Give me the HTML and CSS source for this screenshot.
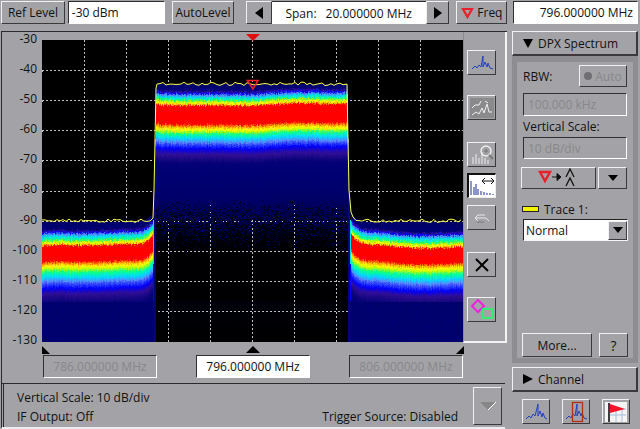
FILE: index.html
```html
<!DOCTYPE html>
<html lang="en">
<head>
<meta charset="utf-8">
<title>DPX Spectrum</title>
<link rel="stylesheet" href="styles.css">
</head>
<body>
<div class="app">
  <header class="topbar">
    <button class="btn ref">Ref Level</button>
    <div class="field reffield">-30 dBm</div>
    <button class="btn auto">AutoLevel</button>
    <div class="span">
      <button class="btn arrow"><svg width="12" height="14" viewBox="0 0 12 14"><path d="M10 1V13L2 7Z" fill="#000"/></svg></button>
      <div class="field spanfield"><span>Span:</span><span>20.000000 MHz</span></div>
      <button class="btn arrow narrow"><svg width="12" height="14" viewBox="0 0 12 14"><path d="M2 1V13L10 7Z" fill="#000"/></svg></button>
    </div>
    <button class="btn freq"><svg width="13" height="12" viewBox="0 0 13 12"><path d="M2 2H11L6.500 10Z" fill="none" stroke="#e8202a" stroke-width="2.200"/></svg>Freq</button>
    <div class="field freqfield">796.000000 MHz</div>
  </header>

  <div class="main">
    <section class="left">
      <div class="chart">
        <div class="chartrow">
          <div class="yaxis">
            <span>-30</span><span>-40</span><span>-50</span><span>-60</span><span>-70</span><span>-80</span><span>-90</span><span>-100</span><span>-110</span><span>-120</span><span>-130</span>
          </div>
          <div class="plot">
            <canvas id="plot" class="canvas" width="421" height="302"></canvas>
            <svg class="overlay" width="421" height="302" viewBox="0 0 421 302">
              <polyline id="trace" fill="none" stroke="#ffff50" stroke-width="1"/>
              <path d="M205.500 40.500H216L211 49Z" fill="none" stroke="#e8202a" stroke-width="1.600"/>
            </svg>
            <svg class="topmark" width="14" height="7" viewBox="0 0 14 7"><path d="M0 0H14L7 7Z" fill="#e01010"/></svg>
          </div>
          <div class="tools">
            <button class="tool t1"><svg width="24" height="20" viewBox="0 0 24 20"><path d="M2 16L5 13L7 15L9 12L11 14L13 3V14L15 9L17 14L18 10L20 15L23 16" fill="none" stroke="#2040c0"/></svg></button>
            <button class="tool t2"><svg width="24" height="20" viewBox="0 0 24 20"><rect x="0" y="0" width="24" height="20" fill="#8a8a8c"/><path d="M2 10L5 7H9L11 3M2 17L6 14L9 16L12 10L14 15L17 6L19 14H22M15 3L18 5" fill="none" stroke="#f0f0f0"/></svg></button>
            <button class="tool t3"><svg width="24" height="22" viewBox="0 0 24 22"><path d="M3 20V13M6 20V10M9 20V14M12 20V8M15 20V14M18 20V16" stroke="#eee"/><circle cx="16" cy="7" r="5" fill="none" stroke="#eee" stroke-width="1.400"/><path d="M19 11L23 15" stroke="#777" stroke-width="2"/><path d="M14 7H18M16 5V9" stroke="#777"/></svg></button>
            <button class="tool t4 active"><svg width="26" height="22" viewBox="0 0 26 22"><path d="M2 6V20M5 12V20M7 9V20M9 14V20M12 16V20M15 17V20M18 18V20M21 18V20M24 19V20" stroke="#1a2a9a"/><path d="M13 6H25M13 6L16 3M13 6L16 9M25 6L22 3M25 6L22 9" fill="none" stroke="#111"/></svg></button>
            <button class="tool t5"><svg width="20" height="14" viewBox="0 0 20 14"><path d="M3 7L6 4H13M3 7L6 10M3 7H14L17 10" fill="none" stroke="#e8e8e8"/><path d="M5 11H12" stroke="#7a7a7a"/></svg></button>
            <button class="tool t6"><svg width="18" height="18" viewBox="0 0 18 18"><path d="M3 3L15 15M15 3L3 15" stroke="#000" stroke-width="2"/></svg></button>
            <button class="tool t7"><svg width="24" height="22" viewBox="0 0 24 22"><path d="M8 1L14 7L8 13L2 7Z" fill="none" stroke="#f020e0" stroke-width="2"/><rect x="13" y="10" width="9" height="9" fill="none" stroke="#30f070" stroke-width="2"/></svg></button>
          </div>
        </div>
        <div class="markers">
          <svg class="mk mk-l" width="8" height="8" viewBox="0 0 8 8"><path d="M0 0L8 8H0Z" fill="#000"/></svg>
          <svg class="mk mk-c" width="14" height="7" viewBox="0 0 14 7"><path d="M0 7H14L7 0Z" fill="#000"/></svg>
          <svg class="mk mk-r" width="8" height="8" viewBox="0 0 8 8"><path d="M8 0V8H0Z" fill="#000"/></svg>
        </div>
        <div class="freqrow">
          <div class="field disabled">786.000000 MHz</div>
          <div class="field center">796.000000 MHz</div>
          <div class="field disabled">806.000000 MHz</div>
        </div>
      </div>
      <footer class="status">
        <div class="statustext">
          <div>Vertical Scale: 10 dB/div</div>
          <div class="statusline"><span>IF Output: Off</span><span>Trigger Source: Disabled</span></div>
        </div>
        <button class="btn statusbtn"><svg width="18" height="10" viewBox="0 0 18 10"><path d="M1 1H17L9 9Z" fill="#87878a"/><path d="M17 1L9 9" stroke="#fff"/></svg></button>
      </footer>
    </section>

    <aside class="right">
      <button class="btn head"><svg width="10" height="9" viewBox="0 0 10 9"><path d="M0 0H10L5 9Z" fill="#000"/></svg>DPX Spectrum</button>
      <div class="panel">
        <div class="rbw"><span>RBW:</span><button class="btn autobtn"><i class="dot"></i>Auto</button></div>
        <div class="field disabled wide">100.000 kHz</div>
        <div class="label">Vertical Scale:</div>
        <div class="field disabled wide">10 dB/div</div>
        <div class="peakrow">
          <button class="btn peak"><svg width="44" height="20" viewBox="0 0 44 20"><path d="M3 4H13L8 13Z" fill="none" stroke="#e8202a" stroke-width="2.400"/><path d="M15 9H23M20 5.500L24 9L20 12.500Z" stroke="#111" fill="#111"/><path d="M29 9L33 1L37 9M29 18L33 10L37 18" fill="none" stroke="#111" stroke-width="1.300"/></svg></button>
          <button class="btn peakdown"><svg width="10" height="6" viewBox="0 0 10 6"><path d="M0 0H10L5 6Z" fill="#000"/></svg></button>
        </div>
        <div class="trace"><i class="swatch"></i>Trace 1:</div>
        <div class="combo"><span>Normal</span><button class="btn combobtn"><svg width="10" height="6" viewBox="0 0 10 6"><path d="M0 0H10L5 6Z" fill="#000"/></svg></button></div>
        <div class="panelfoot">
          <button class="btn more">More...</button>
          <button class="btn help">?</button>
        </div>
      </div>
      <button class="btn head channel"><svg width="10" height="10" viewBox="0 0 10 10"><path d="M0 0L10 5L0 10Z" fill="#000"/></svg>Channel</button>
      <div class="bottomtools">
        <button class="tool"><svg width="24" height="20" viewBox="0 0 24 20"><path d="M2 17L5 14L7 16L9 12L11 14L14 2V14L16 9L18 15L19 11L21 16L23 17" fill="none" stroke="#2040c0"/></svg></button>
        <button class="tool"><svg width="24" height="22" viewBox="0 0 24 22"><path d="M2 18L5 15L7 17L9 13L11 15L13 3V15L15 10L17 15L18 12L20 17L23 18" fill="none" stroke="#2040c0"/><rect x="8.500" y="1.500" width="10" height="19" fill="none" stroke="#b03010" stroke-width="1.300"/></svg></button>
        <button class="tool"><svg width="24" height="22" viewBox="0 0 24 22"><rect x="1" y="1" width="22" height="20" fill="#f4f4f4"/><path d="M6 8H22M6 14H22M12 8V21M18 8V21" stroke="#a8c0e0"/><path d="M5 2V21" stroke="#000" stroke-width="1.500"/><path d="M6 3L21 8L6 12Z" fill="#f01828"/></svg></button>
      </div>
    </aside>
  </div>
</div>
<script src="script.js"></script>
</body>
</html>
```
FILE: styles.css
```css
* { box-sizing: border-box; }
html, body { margin: 0; padding: 0; }
body {
  width: 640px; height: 429px; overflow: hidden;
  background: #a3a3a7;
  font-family: "Open Sans", "Liberation Sans", sans-serif;
  font-size: 12px; color: #111;
}
.app { display: flex; flex-direction: column; height: 429px; }
button { font: inherit; color: inherit; padding: 0; }

.btn, .tool {
  background: #a3a3a7;
  border: 1px solid; border-color: #f2f2f2 #3a3a3c #3a3a3c #f2f2f2;
  display: flex; align-items: center; justify-content: center;
}
.field {
  background: #fff; height: 23px;
  border: 1px solid; border-color: #303032 #fff #fff #303032;
  display: flex; align-items: center; padding: 0 4px;
  white-space: nowrap;
}
.field.disabled { background: #a3a3a7; color: #87878a; }

.topbar { display: flex; height: 24px; padding: 1px 2px 0 1px; align-items: flex-start; }
.topbar .btn { height: 23px; }
.ref { width: 64px; }
.reffield { width: 97px; margin-left: 3px; padding-left: 3px; }
.auto { width: 63px; margin-left: 7px; }
.span { display: flex; margin-left: 12px; }
.arrow { width: 26px; }
.arrow.narrow { width: 23px; }
.spanfield { width: 154px; padding: 0 0 0 13px; border: 0; border-top: 1px solid #303032; gap: 9px; }
.freq { width: 51px; margin-left: 7px; gap: 3px; }
.freqfield { width: 125px; margin-left: 6px; justify-content: flex-end; padding-right: 4px; }

.main { display: flex; flex: 1; margin-top: 7px; min-height: 0; }
.left { width: 509px; display: flex; flex-direction: column; flex: none; }
.chart {
  margin-left: 1px; width: 506px; height: 352px; flex: none;
  border-left: 1px solid #2a2a2c; border-top: 1px solid #2a2a2c;
  position: relative;
}
.chartrow { display: flex; height: 311px; }
.yaxis {
  width: 39px; flex: none; display: flex; flex-direction: column;
  align-items: flex-end; padding-right: 4px; margin-top: -1px;
}
.yaxis span { height: 30.100px; line-height: 15px; flex: none; }
.plot { width: 421px; height: 302px; position: relative; flex: none; margin: 8px 0 0 1px; }
.canvas { display: block; background: #000; }
.overlay { position: absolute; left: 0; top: 0; }
.topmark { position: absolute; left: 204px; top: -6px; }
.tools {
  display: flex; flex-direction: column; align-items: flex-start; width: 44px; flex: none;
  padding-left: 3px;
  border-left: 1px solid #8b8b8e; border-right: 2px solid #f4f4f4; border-bottom: 2px solid #f4f4f4;
}
.tool { width: 29px; height: 25px; flex: none; }
.t1 { margin-top: 18px; }
.t2 { margin-top: 20px; }
.t3 { margin-top: 22px; }
.t4 { margin-top: 6px; background: #fff; border-color: #111 #eee #eee #111; border-width: 2px 1px 1px 2px; }
.t5 { margin-top: 7px; }
.t6 { margin-top: 22px; }
.t7 { margin-top: 20px; }
.markers { position: absolute; left: 0; top: 0; width: 100%; height: 100%; pointer-events: none; }
.mk { position: absolute; top: 314px; }
.mk-l { left: 40px; }
.mk-c { left: 244px; }
.mk-r { left: 454px; }
.freqrow { display: flex; padding-left: 41px; margin-top: 12px; gap: 39px; }
.freqrow .field { width: 114px; justify-content: center; height: 23px; }

.status {
  flex: 1; margin: 0 4px 0 1px; display: flex; min-height: 0;
  border-top: 1px solid #2a2a2c; border-left: 1px solid #2a2a2c;
  border-bottom: 2px solid #eee; padding-left: 1px;
}
.statustext { flex: 1; padding: 4px 0 0 13px; line-height: 19px; border-left: 1px solid #2a2a2c; }
.statusline { display: flex; justify-content: space-between; padding-right: 15px; }
.statusbtn { width: 29px; height: 38px; margin: 3px 3px 0 0; flex: none; }

.right { width: 126px; margin-left: 3px; display: flex; flex-direction: column; flex: none; }
.head { height: 25px; width: 126px; justify-content: flex-start; padding-left: 10px; gap: 5px; flex: none; border-width: 1px 2px 2px 1px; }
.panel {
  height: 307px; flex: none; width: 126px;
  border: 5px solid #8e8e92; border-top-width: 6px;
  display: flex; flex-direction: column; padding: 3px 6px 0 6px;
}
.rbw { display: flex; justify-content: space-between; align-items: center; height: 22px; }
.autobtn { width: 48px; height: 22px; gap: 3px; color: #87878a; }
.dot { width: 8px; height: 8px; border-radius: 50%; background: #707074; display: block; }
.wide { width: 104px; margin-top: 6px; flex: none; }
.label { margin-top: 3px; line-height: 16px; }
.label + .wide { margin-top: 2px; height: 22px; }
.peakrow { display: flex; margin: 8px 0 0 -2px; gap: 2px; }
.peak { width: 76px; height: 22px; }
.peakdown { width: 29px; height: 22px; }
.trace { display: flex; align-items: center; gap: 5px; margin: 13px 0 0 -1px; height: 14px; }
.swatch { display: block; width: 17px; height: 6px; background: #f4f400; border: 1px solid #222; }
.combo { display: flex; align-items: center; justify-content: space-between; background: #fff; height: 22px; width: 105px; margin-top: 3px; border: 1px solid; border-color: #222 #f4f4f4 #f4f4f4 #222; padding-left: 2px; flex: none; }
.combobtn { width: 19px; height: 19px; }
.panelfoot { display: flex; justify-content: space-between; margin: auto 0 1px -1px; width: 106px; }
.more { width: 70px; height: 24px; }
.help { width: 29px; height: 24px; font-size: 14px; }
.channel { margin-top: 4px; }
.bottomtools { display: flex; gap: 12px; padding: 7px 0 0 10px; }
.bottomtools .tool { width: 28px; height: 25px; }
```
FILE: script.js
```js
(function () {
  var cv = document.getElementById('plot');
  var ctx = cv.getContext('2d');
  var W = cv.width, H = cv.height;
  var img = ctx.createImageData(W, H);
  var seed = 12345;
  function rnd() { seed = (seed * 1664525 + 1013904223) >>> 0; return seed / 4294967296; }

  var map = [
    [0, 0, 0, 0], [0.03, 0, 0, 60], [0.08, 0, 0, 115], [0.16, 50, 15, 150], [0.24, 0, 0, 250],
    [0.32, 90, 130, 255], [0.42, 0, 215, 255], [0.52, 0, 255, 150], [0.62, 190, 255, 0],
    [0.68, 255, 255, 0], [0.78, 255, 150, 0], [0.86, 255, 0, 0], [1, 255, 0, 0]
  ];
  function colour(d) {
    d = Math.max(0, Math.min(1, d));
    for (var i = 1; i < map.length; i++) {
      if (d <= map[i][0]) {
        var a = map[i - 1], b = map[i], t = (d - a[0]) / (b[0] - a[0]);
        return [a[1] + (b[1] - a[1]) * t, a[2] + (b[2] - a[2]) * t, a[3] + (b[3] - a[3]) * t];
      }
    }
    return [255, 0, 0];
  }
  function lerpStops(stops, y) {
    if (y <= stops[0][0]) return stops[0][1];
    for (var i = 1; i < stops.length; i++) {
      if (y <= stops[i][0]) {
        var a = stops[i - 1], b = stops[i];
        return a[1] + (b[1] - a[1]) * (y - a[0]) / (b[0] - a[0]);
      }
    }
    return stops[stops.length - 1][1];
  }
  /* stop positions are screen y minus 39 */
  var noise = [[183, 0.07], [191, 0.08], [194, 0.24], [198, 0.42], [202, 0.56], [205, 0.68], [208, 0.88], [222, 0.88],
    [228, 0.68], [233, 0.55], [239, 0.42], [244, 0.3], [250, 0.24], [256, 0.15], [265, 0.09], [303, 0.07]];
  var band = [[45, 0.07], [50, 0.09], [53, 0.24], [57, 0.42], [60, 0.56], [63, 0.68], [66, 0.88], [83, 0.88],
    [89, 0.68], [93, 0.55], [98, 0.42], [103, 0.3], [108, 0.24], [114, 0.16], [123, 0.085], [160, 0.07], [178, 0.045], [205, 0.012], [303, 0]];

  function ripple(x) { return Math.sin(x / 37) * 1.6 + Math.sin(x / 13 + 1) * 0.7; }

  var jitter = [];
  for (var q = 0; q < W; q++) { jitter.push((rnd() - 0.5) * 1.6); }

  var data = img.data;
  for (var y = 0; y < H; y++) {
    var yy = y + 1;
    /* the band's edges lean outward towards the floor */
    var L = yy < 100 ? 156 : yy < 150 ? 155 : 154;
    var R = yy < 100 ? 347 : yy < 150 ? 348 : 349;
    for (var x = 0; x < W; x++) {
      var sx = x + 42, d = 0, rn = rnd() - 0.5;
      if (sx < L || sx > R) {
        if (sx < 153 || sx > 350) {
          var dist = sx < 153 ? 153 - sx : sx - 350;
          var rise = 13 * Math.exp(-dist / 6);
          if (yy >= 183 - rise * 0.8) {
            d = lerpStops(noise, yy + rise + ripple(x) + jitter[x] + rn * 2);
            if (yy > 262) d = 0.075 + rn * 0.015;
          }
        } else if (yy > 180) {
          d = yy < 225 ? 0.45 : yy < 262 ? 0.24 : 0.09;
        }
      } else if (yy >= 45) {
        var e = Math.min(sx - L, R - sx);
        d = lerpStops(band, yy + ripple(x) * 0.8 + jitter[x] + rn * 2);
        if (yy > 160 && yy < 262) {
          if (rnd() < (yy - 160) / 55) d = d * 0.15;
          else if (yy > 175 && rnd() < 0.22 * (1 - (yy - 175) / 90)) d = 0.07;
        }
        if (e < 2 && yy > 120) d = Math.max(d, 0.09);
      }
      var c = colour(d), k = (y * W + x) * 4;
      data[k] = c[0]; data[k + 1] = c[1]; data[k + 2] = c[2]; data[k + 3] = 255;
    }
  }
  /* dotted graticule, visible only where the picture is dark */
  function dot(x, y) {
    var k = (y * W + x) * 4;
    if (y < H && data[k] + data[k + 1] + data[k + 2] < 70) { data[k] = 190; data[k + 1] = 190; data[k + 2] = 190; }
  }
  for (var i = 1; i < 10; i++) {
    for (var gy = 0; gy < H; gy += 4) { dot(42 * i, gy); dot(42 * i, gy + 1); }
  }
  for (var j = 1; j < 10; j++) {
    var ly = Math.round(30.1 * j);
    for (var lx = 0; lx < W; lx += 4) { dot(lx, ly); dot(lx + 1, ly); }
  }
  ctx.putImageData(img, 0, 0);

  /* trace */
  var pts = [];
  var tseed = 77;
  function tr() { tseed = (tseed * 1664525 + 1013904223) >>> 0; return tseed / 4294967296; }
  for (var px = 0; px <= 110; px += 3) { pts.push(px + ',' + (179 + tr() * 3.5).toFixed(1)); }
  pts.push('111,178', '112,150', '113,100', '114,48', '115,44');
  for (var a = 118; a <= 302; a += 3) { pts.push(a + ',' + (42 + tr() * 3.5).toFixed(1)); }
  pts.push('305,44', '306,100', '307,150', '309,172', '311,177');
  for (var b = 314; b <= 420; b += 3) { pts.push(b + ',' + (179 + tr() * 3.5).toFixed(1)); }
  document.getElementById('trace').setAttribute('points', pts.join(' '));
})();
```
